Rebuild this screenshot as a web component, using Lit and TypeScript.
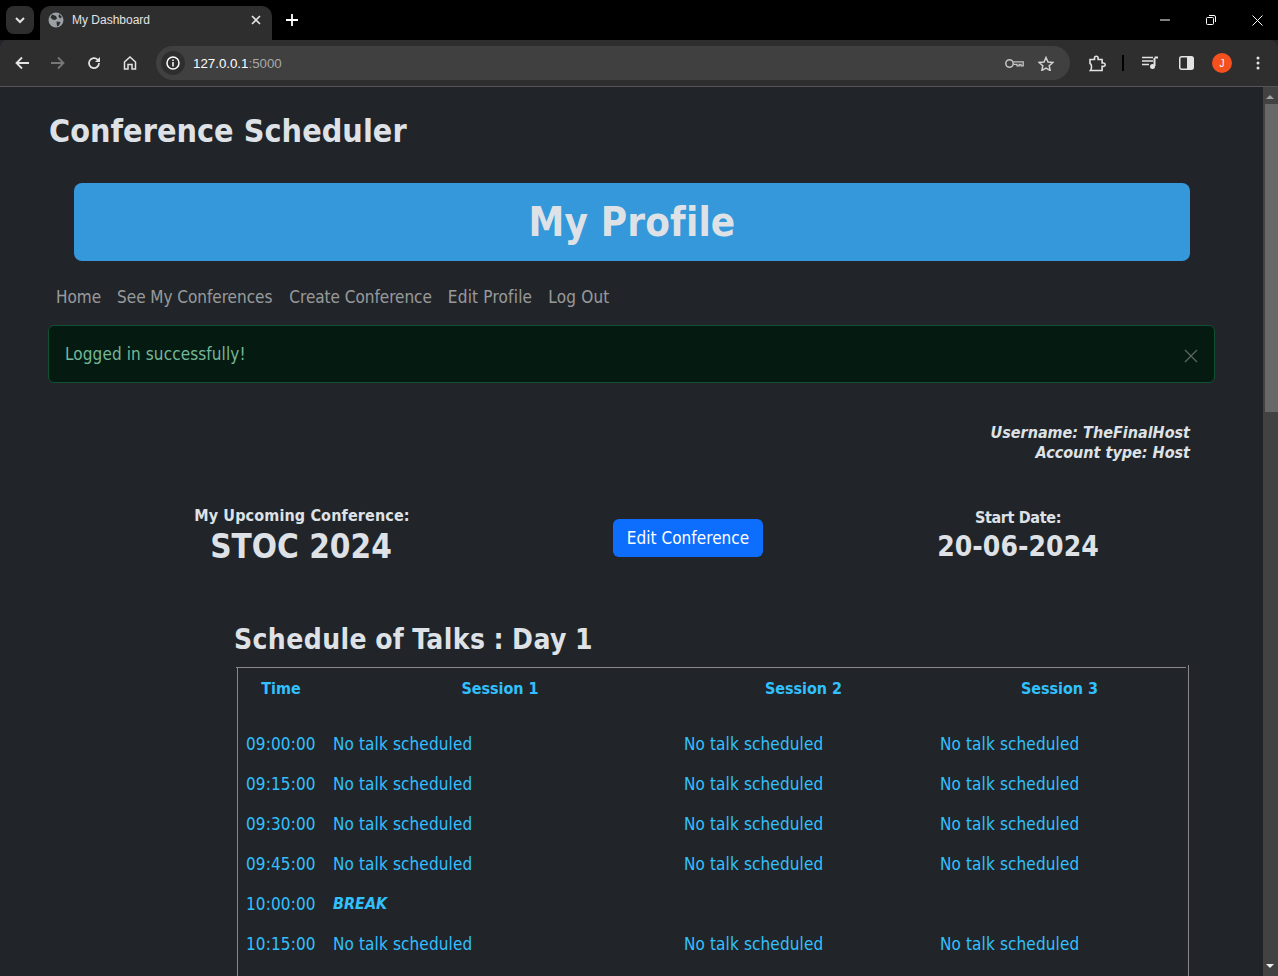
import { LitElement, css, html, svg } from 'lit';
import { customElement } from 'lit/decorators.js';

const full = ['No talk scheduled', 'No talk scheduled', 'No talk scheduled'];
const rows = [
    { time: '09:00:00', talks: full },
    { time: '09:15:00', talks: full },
    { time: '09:30:00', talks: full },
    { time: '09:45:00', talks: full },
    { time: '10:00:00', talks: [] },
    { time: '10:15:00', talks: full },
];

const icon = (w: number, h: number, body: unknown) => html`<svg width=${w} height=${h} viewBox="0 0 ${w} ${h}" fill="none">${body}</svg>`;

@customElement('app-root')
export class AppRoot extends LitElement {
    static styles = css`
        :host {
            display: block;
            width: 1278px;
            height: 976px;
            overflow: hidden;
            background: #212529;
            font-family: "DejaVu Sans Condensed", "DejaVu Sans", sans-serif;
            font-stretch: condensed;
            color: #dee2e6;
        }

        svg { display: block; }

        .tabstrip {
            height: 40px;
            background: #000;
            display: flex;
            font-family: "Liberation Sans", sans-serif;
            font-stretch: normal;
        }
        .tabsearch {
            width: 28px;
            height: 28px;
            margin: 6px 0 0 6px;
            border-radius: 8px;
            background: #2e2e2e;
            display: flex;
            align-items: center;
            justify-content: center;
        }
        .tab {
            width: 232px;
            height: 34px;
            margin: 6px 0 0 6px;
            background: #2e2e2e;
            border-radius: 10px 10px 0 0;
            display: flex;
            align-items: center;
            padding: 0 11px 6px 8px;
            box-sizing: border-box;
            color: #e3e3e3;
            font-size: 12px;
            gap: 8px;
        }
        .tab span { flex: 1; }
        .newtab { margin: 13px 0 0 13px; }
        .winbtns {
            margin-left: auto;
            display: flex;
            align-items: flex-start;
            margin-right: -2px;
        }
        .winbtn {
            width: 46px;
            height: 40px;
            display: flex;
            align-items: center;
            justify-content: center;
        }

        .toolbar {
            height: 46px;
            background: #2e2e2e;
            border-bottom: 1px solid #555;
            display: flex;
            align-items: center;
            font-family: "Liberation Sans", sans-serif;
            font-stretch: normal;
            border-radius: 8px 8px 0 0;
        }
        .navbtn, .toolbtn {
            width: 36px;
            height: 36px;
            display: flex;
            align-items: center;
            justify-content: center;
        }
        .navbtns { display: flex; margin-left: 4px; }
        .omnibox {
            width: 914px;
            height: 34px;
            margin-left: 8px;
            background: #404040;
            border-radius: 17px;
            display: flex;
            align-items: center;
            padding: 0 16px 0 5px;
            box-sizing: border-box;
            font-size: 13.3px;
            color: #a8a8a8;
        }
        .info {
            width: 24px;
            height: 24px;
            border-radius: 50%;
            background: #2e2e2e;
            display: flex;
            align-items: center;
            justify-content: center;
            margin-right: 8px;
        }
        .host { color: #fff; }
        .omni-right { margin-left: auto; display: flex; gap: 14px; align-items: center; }
        .tools { display: flex; align-items: center; margin-left: 9px; }
        .divider { width: 2px; height: 16px; background: #000; margin: 0 8px 0 7px; }
        .avatar {
            width: 20px;
            height: 20px;
            border-radius: 50%;
            background: #f4511e;
            color: #fff;
            font-size: 10px;
            display: flex;
            align-items: center;
            justify-content: center;
        }

        .viewport { display: flex; height: 889px; }
        .page {
            width: 1263px;
            flex: none;
            padding: 25px 48px 0 48px;
            box-sizing: border-box;
        }
        .scrollbar {
            width: 15px;
            background: #424242;
            position: relative;
        }
        .arrow {
            position: absolute;
            left: 3px;
            width: 0;
            height: 0;
            border-left: 4px solid transparent;
            border-right: 4px solid transparent;
        }
        .arrow.up { top: 8px; border-bottom: 4px solid #a0a0a0; }
        .arrow.down { bottom: 8px; border-top: 4px solid #eee; }
        .thumb {
            position: absolute;
            top: 17px;
            left: 2px;
            right: 0;
            height: 308px;
            background: #686868;
        }

        h1 {
            margin: 0 0 0 1px;
            font-size: 32px;
            line-height: 38px;
            font-weight: 700;
            letter-spacing: 0.04px;
        }
        .banner {
            margin: 33px 0 0 26px;
            width: 1116px;
            height: 78px;
            background: #3498db;
            border-radius: 8px;
            display: flex;
            align-items: center;
            justify-content: center;
            font-size: 40px;
            font-weight: 700;
            letter-spacing: 0.15px;
        }
        .nav {
            display: flex;
            margin-top: 24px;
            padding-left: 8px;
            gap: 16px;
            font-size: 17px;
            line-height: 24px;
            letter-spacing: -0.03px;
            color: rgba(255, 255, 255, 0.55);
        }
        .nav .wide { letter-spacing: 0.2px; }
        .nav .create { margin-left: 1px; }
        .alert {
            margin-top: 16px;
            width: 1167px;
            height: 58px;
            box-sizing: border-box;
            background: #051b11;
            border: 1px solid #0f5132;
            border-radius: 6px;
            color: #75b798;
            font-size: 17px;
            letter-spacing: 0.1px;
            padding: 0 16px;
            display: flex;
            align-items: center;
            justify-content: space-between;
        }
        .alert svg { margin-top: 3px; }
        .user {
            margin-top: 39px;
            width: 1142px;
            padding-top: 1px;
            text-align: right;
            font-style: italic;
            font-weight: 700;
            font-size: 16px;
            line-height: 20px;
        }
        .upcoming {
            margin-top: 43px;
            display: grid;
            grid-template-columns: 506px 268px 392px;
            align-items: center;
            text-align: center;
        }
        .upcoming small { display: block; font-size: 16px; font-weight: 700; line-height: 20px; }
        .conf strong {
            display: block;
            font-size: 33px;
            line-height: 41px;
        }
        .conf small { letter-spacing: 0.13px; padding-left: 2px; }
        .date small { letter-spacing: -0.35px; }
        .date strong {
            display: block;
            font-size: 28px;
            line-height: 36px;
            padding-top: 1px;
            letter-spacing: 0.05px;
        }
        .btn {
            justify-self: center;
            height: 38px;
            padding: 0 13.500px;
            background: #0d6efd;
            color: #fff;
            border-radius: 6px;
            font-size: 17px;
            letter-spacing: 0.05px;
            display: flex;
            align-items: center;
            margin-top: 3px;
        }
        .schedule { margin: 0 0 0 186px; width: 956px; }
        h2 {
            margin: 56px 0 10px 0;
            font-size: 28px;
            line-height: 34px;
            font-weight: 700;
            letter-spacing: 0.4px;
            word-spacing: -1px;
        }
        .table {
            position: relative;
            margin-left: 3px;
            width: 950px;
            height: 320px;
            align-content: start;
            padding: 1px 0 0 0;
            border-left: 1px solid #888;
            border-right: 1px solid #888;
            display: grid;
            grid-template-columns: 87px 351px 256px 256px;
            color: #32c0ff;
            font-size: 17px;
            line-height: 24px;
            letter-spacing: 0.12px;
        }
        .table::before {
            content: "";
            position: absolute;
            top: 0;
            left: -2px;
            right: 2px;
            height: 1px;
            background: #888;
        }
        .table::after {
            content: "";
            position: absolute;
            top: -2px;
            right: -1px;
            width: 1px;
            height: 3px;
            background: #888;
        }
        .th {
            font-size: 16px;
            letter-spacing: -0.04px;
            font-weight: 700;
            text-align: center;
            height: 56px;
            padding: 9px 1px 0 0;
            box-sizing: border-box;
        }
        .td {
            height: 40px;
            padding: 8px 8px;
            box-sizing: border-box;
            white-space: nowrap;
        }
        .break { font-size: 16px; font-style: italic; font-weight: 700; letter-spacing: 0; }
    `;

    private renderChrome() {
        return html`
            <div class="tabstrip">
                <div class="tabsearch">${icon(12, 8, svg`<path d="M2 2l4 4 4-4" stroke="#e3e3e3" stroke-width="2"/>`)}</div>
                <div class="tab">
                    ${icon(16, 16, svg`<circle cx="8" cy="8" r="7.500" fill="#9aa0a6"/><path d="M4 2.500l4 1.500 1 2.500-2 1.500-2.500-.5-2-2zM8.500 9.500l4 .5-1.500 3.500-2 1zM11 2l3 3-2 1.500-1.500-2z" fill="#2e2e2e"/>`)}
                    <span>My Dashboard</span>
                    ${icon(10, 10, svg`<path d="M1 1l8 8M9 1l-8 8" stroke="#e3e3e3" stroke-width="1.600"/>`)}
                </div>
                <div class="newtab">${icon(14, 14, svg`<path d="M7 1v12M1 7h12" stroke="#fff" stroke-width="1.800"/>`)}</div>
                <div class="winbtns">
                    <div class="winbtn">${icon(10, 2, svg`<path d="M0 1h10" stroke="#fff"/>`)}</div>
                    <div class="winbtn">${icon(10, 10, svg`<rect x=".5" y="2.500" width="7" height="7" rx="1" stroke="#fff"/><path d="M3 .5h5a1.500 1.500 0 011.500 1.500v5" stroke="#fff"/>`)}</div>
                    <div class="winbtn">${icon(11, 11, svg`<path d="M.5.5l10 10M10.500.5l-10 10" stroke="#fff"/>`)}</div>
                </div>
            </div>
            <div class="toolbar">
                <div class="navbtns">
                    <div class="navbtn">${icon(14, 14, svg`<path d="M14 7H2M7 1.500L1.500 7 7 12.500" stroke="#e3e3e3" stroke-width="1.800"/>`)}</div>
                    <div class="navbtn">${icon(14, 14, svg`<path d="M0 7h12M7 1.500L12.500 7 7 12.500" stroke="#777" stroke-width="1.800"/>`)}</div>
                    <div class="navbtn">${icon(14, 14, svg`<path d="M12 7a5 5 0 11-1.500-3.500L12 5" stroke="#e3e3e3" stroke-width="1.700"/><path d="M13 1v5H8z" fill="#e3e3e3"/>`)}</div>
                    <div class="navbtn">${icon(14, 14, svg`<path d="M1.500 6L7 1l5.500 5v7H9V8.500H5V13H1.500z" stroke="#e3e3e3" stroke-width="1.500"/>`)}</div>
                </div>
                <div class="omnibox">
                    <div class="info">${icon(14, 14, svg`<circle cx="7" cy="7" r="6" stroke="#fff" stroke-width="1.500"/><path d="M7 6v4.500M7 3.500v1.500" stroke="#fff" stroke-width="1.500"/>`)}</div>
                    <span><span class="host">127.0.0.1</span>:5000</span>
                    <div class="omni-right">
                        ${icon(19, 11, svg`<circle cx="4.500" cy="5.500" r="3.700" stroke="#c4c4c4" stroke-width="1.500"/><path d="M8.200 3.800h10v4h-2.200V6.300h-1.800v1.500h-2.200V6.300H8.200" stroke="#c4c4c4" stroke-width="1.300"/>`)}
                        ${icon(16, 15, svg`<path d="M8 1.500l2 4.500 4.800.5-3.600 3.200 1 4.800L8 12.200 3.800 14.500l1-4.800L1.200 6.500 6 6z" stroke="#d0d0d0" stroke-width="1.500"/>`)}
                    </div>
                </div>
                <div class="tools">
                    <div class="toolbtn">${icon(17, 17, svg`<path d="M1 4.500H5.500V3a1.800 1.800 0 013.600 0v1.500h4V8h1.400a1.700 1.700 0 010 3.400h-1.400v4.100H1.500c1-1 1-2 1-3.500s0-3-1.500-3.500z" stroke="#e3e3e3" stroke-width="1.600"/>`)}</div>
                    <div class="divider"></div>
                    <div class="toolbtn">${icon(17, 14, svg`<path d="M0 1.500h11M0 5h11M0 8.500h7" stroke="#e3e3e3" stroke-width="1.500"/><path d="M12.500 2v8" stroke="#e3e3e3" stroke-width="2"/><circle cx="10.500" cy="10.500" r="2.500" fill="#e3e3e3"/><path d="M12.500 1.500h3.500" stroke="#e3e3e3" stroke-width="2"/>`)}</div>
                    <div class="toolbtn">${icon(15, 14, svg`<rect x=".75" y=".75" width="13.500" height="12.500" rx="2" stroke="#e3e3e3" stroke-width="1.500"/><rect x="8" y="1" width="6" height="12" fill="#e3e3e3"/>`)}</div>
                    <div class="toolbtn"><div class="avatar">J</div></div>
                    <div class="toolbtn">${icon(4, 14, svg`<circle cx="2" cy="2" r="1.500" fill="#e3e3e3"/><circle cx="2" cy="7" r="1.500" fill="#e3e3e3"/><circle cx="2" cy="12" r="1.500" fill="#e3e3e3"/>`)}</div>
                </div>
            </div>
        `;
    }

    protected render() {
        return html`
            ${this.renderChrome()}
            <div class="viewport">
                <div class="page">
                    <h1>Conference Scheduler</h1>
                    <div class="banner">My Profile</div>
                    <div class="nav">
                        <span>Home</span><span>See My Conferences</span><span class="create">Create Conference</span><span class="wide">Edit Profile</span><span class="wide">Log Out</span>
                    </div>
                    <div class="alert">
                        <span>Logged in successfully!</span>
                        ${icon(14, 14, svg`<path d="M1 1l12 12M13 1L1 13" stroke="#5a6660" stroke-width="1.300"/>`)}
                    </div>
                    <div class="user">Username: TheFinalHost<br />Account type: Host</div>
                    <div class="upcoming">
                        <div class="conf"><small>My Upcoming Conference:</small><strong>STOC 2024</strong></div>
                        <div class="btn">Edit Conference</div>
                        <div class="date"><small>Start Date:</small><strong>20-06-2024</strong></div>
                    </div>
                    <div class="schedule">
                        <h2>Schedule of Talks : Day 1</h2>
                        <div class="table">
                            <div class="th">Time</div><div class="th">Session 1</div><div class="th">Session 2</div><div class="th">Session 3</div>
                            ${rows.map(r => html`
                                <div class="td">${r.time}</div>
                                ${r.talks.length
                                    ? r.talks.map(t => html`<div class="td">${t}</div>`)
                                    : html`<div class="td break">BREAK</div><div class="td"></div><div class="td"></div>`}
                            `)}
                        </div>
                    </div>
                </div>
                <div class="scrollbar">
                    <div class="arrow up"></div>
                    <div class="thumb"></div>
                    <div class="arrow down"></div>
                </div>
            </div>
        `;
    }
}
